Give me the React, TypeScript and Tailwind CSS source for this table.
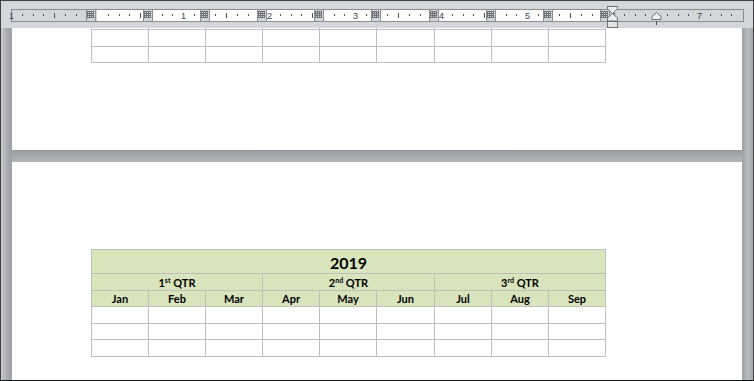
import React from 'react';

// x positions (page coords) of the table's vertical lines
const COLUMN_LINES = [91, 148, 205, 262, 319, 376, 434, 491, 548, 605];
const MONTHS = ['Jan', 'Feb', 'Mar', 'Apr', 'May', 'Jun', 'Jul', 'Aug', 'Sep'];
const QUARTERS = [
  { n: '1', sup: 'st' },
  { n: '2', sup: 'nd' },
  { n: '3', sup: 'rd' },
];

const MARGIN_X = 97;
const EIGHTH = 10.75;
const BAR_X = 12;
const BAR_Y = 10;

const cell = 'border-r border-b border-[#bfbfbf]';
const gridCols =
  'grid grid-cols-[57px_57px_57px_57px_57px_58px_57px_57px_57px] w-fit border-l border-[#bfbfbf]';

function GridGlyph({ x }: { x: number }) {
  const left = x - 4 - BAR_X;
  const top = 11 - BAR_Y;
  const lines = [0, 2, 4, 6];
  return (
    <g stroke="#6f7276" strokeWidth="1">
      {lines.map((d) => (
        <line key={'v' + d} x1={left + d + 0.5} y1={top} x2={left + d + 0.5} y2={top + 7} />
      ))}
      {lines.map((d) => (
        <line key={'h' + d} x1={left} y1={top + d + 0.5} x2={left + 7} y2={top + d + 0.5} />
      ))}
    </g>
  );
}

function Ruler() {
  const marks = [];
  for (let k = -8; k <= 59; k++) {
    if (k === 0) continue; // no label at the margin itself
    const abs = MARGIN_X + k * EIGHTH;
    const x = Math.round(abs) - BAR_X;
    if (k % 8 === 0) {
      marks.push(
        <text
          key={k}
          x={x + 0.5}
          y={8.5}
          fontSize="9"
          textAnchor="middle"
          fill="#3b4048"
          fontFamily="'Liberation Sans', Arial, sans-serif"
        >
          {Math.abs(k / 8)}
        </text>
      );
    } else if (k % 4 === 0) {
      marks.push(<rect key={k} x={x} y={3} width={1} height={5} fill="#4d5055" />);
    } else {
      marks.push(<rect key={k} x={x} y={4} width={1} height={2} fill="#4d5055" />);
    }
  }

  return (
    <div className="relative h-[27px] bg-[#d3d6da] pl-[10px] pt-[8px]">
      <div className="relative w-[733px] h-[13px] border border-[#8a8d92] bg-[#d3d6da]">
        <svg className="absolute inset-0 overflow-visible" width="731" height="11">
          <rect x={MARGIN_X - BAR_X} y={0} width={600 - MARGIN_X} height={11} fill="#ffffff" />
          {marks}
          {COLUMN_LINES.map((b) => (
            <g key={b}>
              <rect x={b - 5 - BAR_X} y={0} width={10} height={11} fill="#d3d6da" />
              <line x1={b - 5 - BAR_X + 0.5} y1={0} x2={b - 5 - BAR_X + 0.5} y2={11} stroke="#8a8d92" />
              <line x1={b + 5 - BAR_X - 0.5} y1={0} x2={b + 5 - BAR_X - 0.5} y2={11} stroke="#8a8d92" />
              <GridGlyph x={b} />
            </g>
          ))}
        </svg>
      </div>

      {/* indent marker */}
      <svg className="absolute left-[606px] top-[5px]" width="12" height="23">
        <path d="M0.5 0.5H10.5V3L5.5 7.5L0.5 3Z" fill="#eceef0" stroke="#6d7075" />
        <path d="M5.5 7.5L10.5 12V15H0.5V12Z" fill="#eceef0" stroke="#6d7075" />
        <rect x="0.5" y="15.5" width="10" height="6" fill="#e2e4e7" stroke="#6d7075" />
      </svg>

      {/* tab marker */}
      <svg className="absolute left-[650px] top-[11px]" width="11" height="14">
        <path d="M5.5 0.5L10 4.5V7.5H1V4.5Z" fill="#eceef0" stroke="#6d7075" />
        <rect x="5" y="9" width="1" height="4" fill="#4d5055" />
      </svg>
    </div>
  );
}

function TopTable() {
  const rows = ['h-[2px]', 'h-[17px]', 'h-[16px]'];
  return (
    <div className={`${gridCols} ml-[79px]`}>
      {rows.map((h, r) =>
        MONTHS.map((m) => <div key={r + m} className={`${cell} ${h}`} />)
      )}
    </div>
  );
}

function CalendarTable() {
  const dataRows = ['h-[17px]', 'h-[16px]', 'h-[17px]'];
  return (
    <div
      className={`${gridCols} ml-[79px] mt-[87px] border-t text-black font-bold font-['Lato',sans-serif]`}
    >
      <div className={`${cell} col-span-9 h-[24px] bg-[#d8e4bc] flex items-center justify-center pt-[2px] text-[16px] leading-none`}>
        2019
      </div>
      {QUARTERS.map((q) => (
        <div
          key={q.n}
          className={`${cell} col-span-3 h-[17px] bg-[#d8e4bc] flex items-center justify-center text-[11px] leading-none`}
        >
          <span>
            {q.n}
            <sup className="text-[7px] -top-[4px]">{q.sup}</sup> QTR
          </span>
        </div>
      ))}
      {MONTHS.map((m) => (
        <div
          key={m}
          className={`${cell} h-[16px] bg-[#d8e4bc] flex items-center justify-center text-[11px] leading-none`}
        >
          {m}
        </div>
      ))}
      {dataRows.map((h, r) =>
        MONTHS.map((m) => <div key={r + m} className={`${cell} ${h} bg-white`} />)
      )}
    </div>
  );
}

export default function App() {
  return (
    <div className="w-[754px] h-[381px] overflow-hidden border border-[#404040] border-b-[#111111] flex flex-col bg-[#a9acb0]">
      <Ruler />
      <div className="flex flex-1 min-h-0">
        <div className="w-[11px] bg-gradient-to-r from-[#c8cbce] via-[#aaadb1] to-[#9c9fa3]" />
        <div className="w-[730px] flex flex-col">
          <div className="h-[122px] bg-white overflow-hidden">
            <TopTable />
          </div>
          <div className="h-[12px] bg-gradient-to-b from-[#989b9f] to-[#b3b6b9]" />
          <div className="flex-1 bg-white overflow-hidden">
            <CalendarTable />
          </div>
        </div>
        <div className="w-[11px] bg-gradient-to-r from-[#9c9fa3] via-[#b9bcbf] to-[#a4a7ab]" />
      </div>
    </div>
  );
}
